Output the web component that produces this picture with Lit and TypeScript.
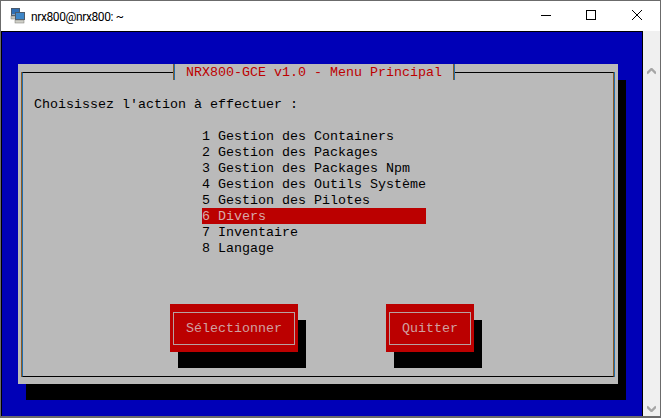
import { LitElement, html, css, svg } from "lit";
import { customElement } from "lit/decorators.js";

const ITEMS = [
  "1 Gestion des Containers",
  "2 Gestion des Packages",
  "3 Gestion des Packages Npm",
  "4 Gestion des Outils Système",
  "5 Gestion des Pilotes",
  "6 Divers",
  "7 Inventaire",
  "8 Langage",
];

@customElement("app-root")
export class AppRoot extends LitElement {
  static styles = css`
    :host {
      display: block;
      width: 661px;
      height: 418px;
      overflow: hidden;
      background: #6b6b6b;
      font-family: "Liberation Mono", monospace;
    }
    .window {
      box-sizing: border-box;
      width: 661px;
      height: 418px;
      padding: 1px 1px 2px 1px;
      display: flex;
      flex-direction: column;
    }
    .titlebar {
      height: 30px;
      flex: none;
      background: #fff;
      display: flex;
      align-items: center;
      box-sizing: border-box;
      padding-left: 9px;
      font: 12px Roboto, "Liberation Sans", sans-serif;
      color: #000;
    }
    .titlebar svg.app { margin-right: 5px; flex: none; margin-bottom: 1px; }
    .title { flex: 1; letter-spacing: -0.38px; padding-top: 1px; }
    .ctl {
      width: 46px;
      height: 30px;
      box-sizing: border-box;
      padding-bottom: 2px;
      display: flex;
      align-items: center;
      justify-content: center;
    }
    .body {
      flex: 1;
      display: flex;
      min-height: 0;
    }
    .term {
      flex: 1;
      background: #0000b7;
      box-sizing: border-box;
      border: 1px solid #000;
      border-bottom: 0;
      padding: 32px 0 0 16px;
    }
    .scroll {
      width: 17px;
      flex: none;
      background: #f0f0f0;
      display: flex;
      flex-direction: column;
      justify-content: space-between;
      align-items: center;
      padding: 37px 0 4px;
      box-sizing: border-box;
    }
    .dialog {
      position: relative;
      box-sizing: border-box;
      width: 600px;
      height: 320px;
      background: #bababa;
      box-shadow: 8px 16px 0 #000;
      padding: 8px 4px;
      font-size: 13.33px;
      line-height: 18px;
      color: #000;
    }
    .frame {
      box-sizing: border-box;
      height: 305px;
      border-top: 1px solid #000;
      border-bottom: 1px solid #000;
      border-left: 1px solid #1e6eb0;
      border-right: 1px solid #8a5a24;
      box-shadow: -1px 0 0 #8a5a24, 1px 0 0 #1e6eb0;
      padding: 23px 11px 0;
    }
    .legend {
      position: absolute;
      top: 0;
      left: 155px;
      width: 281px;
      height: 16px;
      box-sizing: border-box;
      background: #bababa;
      border-left: 1px solid #8a5a24;
      border-right: 1px solid #8a5a24;
      box-shadow: inset 1px 0 0 #1e6eb0, 1px 0 0 #1e6eb0;
      color: #bd0000;
      padding-left: 12px;
      white-space: pre;
    }
    .prompt { height: 16px; white-space: pre; }
    .menu {
      margin: 16px 0 0 168px;
      width: 224px;
    }
    .item { height: 16px; white-space: pre; }
    .item.on { background: #bb0000; color: #d8aaaa; }
    .buttons {
      margin-top: 48px;
      padding-left: 136px;
      display: flex;
      gap: 88px;
    }
    .btn {
      box-sizing: border-box;
      height: 48px;
      padding: 8px 3px;
      background: #bb0000;
      box-shadow: 8px 16px 0 #000;
      color: #d0a0a0;
    }
    .btn span {
      display: block;
      box-sizing: border-box;
      height: 33px;
      border: 1px solid #b8a0a0;
      padding: 7px 12px;
      white-space: pre;
    }
  `;

  render() {
    return html`
      <div class="window">
        <div class="titlebar">
          <svg class="app" width="16" height="16" viewBox="0 0 16 16">
            ${svg`
              <rect x="1.5" y="0.5" width="8" height="7" fill="#8fa6bd" stroke="#4a5a6c" />
              <rect x="2" y="1" width="7" height="5" fill="#2f6fb5" />
              <rect x="1" y="8" width="8" height="3" fill="#c8c8c0" stroke="#7a7a74" stroke-width=".5" />
              <rect x="5.5" y="4.5" width="9" height="7" fill="#8fa6bd" stroke="#4a5a6c" />
              <rect x="6" y="5" width="8" height="6" fill="#3d86c8" />
              <rect x="5" y="12" width="9" height="3" fill="#d0d0c8" stroke="#7a7a74" stroke-width=".5" />
            `}
          </svg>
          <div class="title">nrx800@nrx800: ~</div>
          <div class="ctl">
            <svg width="12" height="10" viewBox="0 0 12 10">${svg`<path d="M2 5.5H12" stroke="#000" fill="none"/>`}</svg>
          </div>
          <div class="ctl">
            <svg width="10" height="10" viewBox="0 0 10 10">${svg`<rect x=".5" y=".5" width="9" height="9" stroke="#000" fill="none"/>`}</svg>
          </div>
          <div class="ctl">
            <svg width="10" height="10" viewBox="0 0 10 10">${svg`<path d="M0 0L10 10M10 0L0 10" stroke="#000" fill="none"/>`}</svg>
          </div>
        </div>
        <div class="body">
          <div class="term">
            <div class="dialog">
              <div class="legend">NRX800-GCE v1.0 - Menu Principal</div>
              <div class="frame">
                <div class="prompt">Choisissez l'action à effectuer :</div>
                <div class="menu">
                  ${ITEMS.map((t, i) => html`<div class="item ${i === 5 ? "on" : ""}">${t}</div>`)}
                </div>
                <div class="buttons">
                  <div class="btn"><span>Sélectionner</span></div>
                  <div class="btn"><span>Quitter</span></div>
                </div>
              </div>
            </div>
          </div>
          <div class="scroll">
            <svg width="9" height="7" viewBox="0 0 9 7">${svg`<path d="M0 5.5L4.5 1L9 5.5" stroke="#a6a6a6" stroke-width="2.4" fill="none"/>`}</svg>
            <svg width="9" height="7" viewBox="0 0 9 7">${svg`<path d="M0 1.5L4.5 6L9 1.5" stroke="#a6a6a6" stroke-width="2.4" fill="none"/>`}</svg>
          </div>
        </div>
      </div>
    `;
  }
}
